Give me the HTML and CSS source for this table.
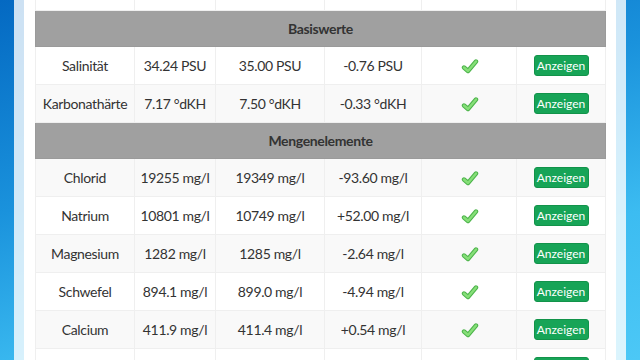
FILE: index.html
```html
<!DOCTYPE html>
<html lang="de">
<head>
<meta charset="utf-8">
<title>Wasseranalyse</title>
<link rel="stylesheet" href="styles.css">
</head>
<body>
<div class="frame">
  <div class="panel">
    <table class="results">
      <colgroup>
        <col class="c1"><col class="c2"><col class="c3"><col class="c4"><col class="c5"><col class="c6">
      </colgroup>
      <tbody>
        <tr class="top"><td></td><td></td><td></td><td></td><td></td><td></td></tr>
        <tr class="group"><th colspan="6">Basiswerte</th></tr>
        <tr><td>Salinität</td><td>34.24 PSU</td><td>35.00 PSU</td><td>-0.76 PSU</td><td><svg class="check" viewBox="0 0 18 16"><path class="ck-o" d="M3 9.5 L7 13 L15 3.5"/><path class="ck-i" d="M3 9.5 L7 13 L15 3.5"/></svg></td><td><button class="btn">Anzeigen</button></td></tr>
        <tr class="alt"><td>Karbonathärte</td><td>7.17 °dKH</td><td>7.50 °dKH</td><td>-0.33 °dKH</td><td><svg class="check" viewBox="0 0 18 16"><path class="ck-o" d="M3 9.5 L7 13 L15 3.5"/><path class="ck-i" d="M3 9.5 L7 13 L15 3.5"/></svg></td><td><button class="btn">Anzeigen</button></td></tr>
        <tr class="group"><th colspan="6">Mengenelemente</th></tr>
        <tr class="alt"><td>Chlorid</td><td>19255 mg/l</td><td>19349 mg/l</td><td>-93.60 mg/l</td><td><svg class="check" viewBox="0 0 18 16"><path class="ck-o" d="M3 9.5 L7 13 L15 3.5"/><path class="ck-i" d="M3 9.5 L7 13 L15 3.5"/></svg></td><td><button class="btn">Anzeigen</button></td></tr>
        <tr><td>Natrium</td><td>10801 mg/l</td><td>10749 mg/l</td><td>+52.00 mg/l</td><td><svg class="check" viewBox="0 0 18 16"><path class="ck-o" d="M3 9.5 L7 13 L15 3.5"/><path class="ck-i" d="M3 9.5 L7 13 L15 3.5"/></svg></td><td><button class="btn">Anzeigen</button></td></tr>
        <tr class="alt"><td>Magnesium</td><td>1282 mg/l</td><td>1285 mg/l</td><td>-2.64 mg/l</td><td><svg class="check" viewBox="0 0 18 16"><path class="ck-o" d="M3 9.5 L7 13 L15 3.5"/><path class="ck-i" d="M3 9.5 L7 13 L15 3.5"/></svg></td><td><button class="btn">Anzeigen</button></td></tr>
        <tr><td>Schwefel</td><td>894.1 mg/l</td><td>899.0 mg/l</td><td>-4.94 mg/l</td><td><svg class="check" viewBox="0 0 18 16"><path class="ck-o" d="M3 9.5 L7 13 L15 3.5"/><path class="ck-i" d="M3 9.5 L7 13 L15 3.5"/></svg></td><td><button class="btn">Anzeigen</button></td></tr>
        <tr class="alt"><td>Calcium</td><td>411.9 mg/l</td><td>411.4 mg/l</td><td>+0.54 mg/l</td><td><svg class="check" viewBox="0 0 18 16"><path class="ck-o" d="M3 9.5 L7 13 L15 3.5"/><path class="ck-i" d="M3 9.5 L7 13 L15 3.5"/></svg></td><td><button class="btn">Anzeigen</button></td></tr>
        <tr class="last"><td></td><td></td><td></td><td></td><td></td><td><button class="btn">Anzeigen</button></td></tr>
      </tbody>
    </table>
  </div>
</div>
</body>
</html>
```

FILE: styles.css
```css
html, body {
  margin: 0;
  padding: 0;
  height: 100%;
  overflow: hidden;
}
body {
  background: linear-gradient(165deg, #0469c2 0%, #1a92dc 40%, #3cbcf1 72%, #4cc8f6 100%);
  font-family: Lato, "Open Sans", sans-serif;
  color: #333;
}
.frame {
  margin: -27px 14px 0 14px;
  border: 10px solid rgba(255, 255, 255, 0.8);
  border-top: 0;
  background-clip: padding-box;
}
.panel {
  background: #fff;
  padding: 0 11px 20px 11px;
}
.results {
  width: 570px;
  border-collapse: collapse;
  table-layout: fixed;
  font-size: 14px;
  letter-spacing: -0.35px;
}
.c1 { width: 99px; }
.c2 { width: 81px; }
.c3 { width: 109px; }
.c4 { width: 97px; }
.c5 { width: 95px; }
.c6 { width: 89px; }
.results td {
  height: 37px;
  padding: 0;
  text-align: center;
  vertical-align: middle;
  border: 1px solid #efefef;
  white-space: nowrap;
}
.results tr:first-child td { border-top: 0; }
.results tr.alt td { background: #f9f9f9; }
.results .group th {
  height: 35px;
  padding: 0;
  background: #a0a0a0;
  border: 1px solid #9a9a9a;
  border-top: 1px solid #b4b4b4;
  font-weight: 700;
  font-size: 14px;
  color: #333;
  text-align: center;
  vertical-align: middle;
}
.check {
  width: 18px;
  height: 16px;
  display: block;
  margin: 0 auto;
  position: relative;
  left: 1px;
}
.ck-o {
  fill: none;
  stroke: #4cb34a;
  stroke-width: 4.4;
  stroke-linecap: round;
  stroke-linejoin: round;
}
.ck-i {
  fill: none;
  stroke: #86df78;
  stroke-width: 2.4;
  stroke-linecap: round;
  stroke-linejoin: round;
}
.btn {
  font-family: Lato, "Open Sans", sans-serif;
  font-size: 12px;
  letter-spacing: 0;
  color: #fff;
  background: #17a457;
  border: 1px solid #12934a;
  border-radius: 3px;
  height: 21px;
  width: 55px;
  padding: 0;
  line-height: 19px;
}
```
